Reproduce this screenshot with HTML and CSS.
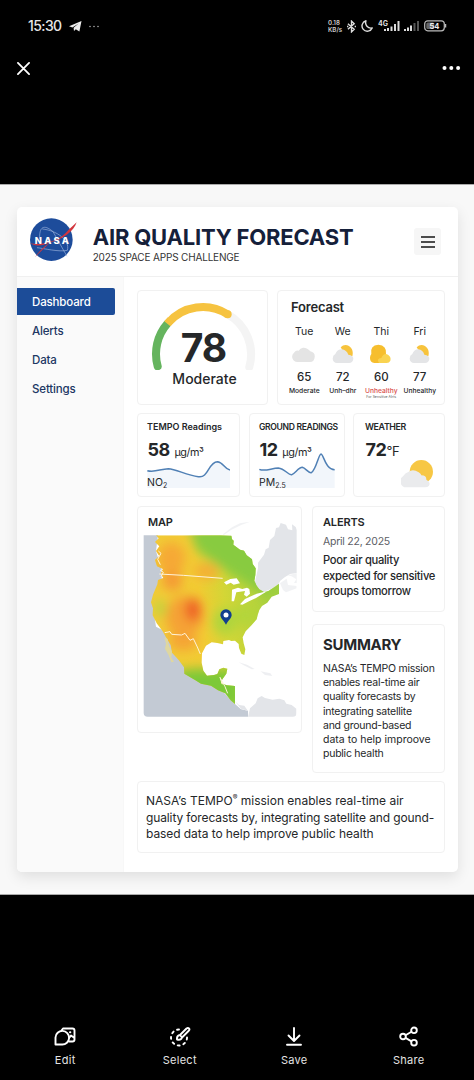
FILE: index.html
```html
<!DOCTYPE html>
<html lang="en">
<head>
<meta charset="utf-8">
<title>Air Quality Forecast</title>
<link rel="stylesheet" href="styles.css">
</head>
<body>
<div class="phone">
  <header class="status">
    <div class="status-left">
      <span class="clock">15:30</span>
      <svg class="plane" viewBox="0 0 13 11"><path d="M0 5.2 12.5 0 10.4 10.6 6.8 8.2 5 10 4.6 6.8 9.6 2.6 3.4 6.4Z" fill="#eee"/></svg>
      <svg class="more" viewBox="0 0 10 3"><g fill="#aaa"><circle cx="1" cy="1.5" r=".8"/><circle cx="5" cy="1.5" r=".8"/><circle cx="9" cy="1.5" r=".8"/></g></svg>
    </div>
    <div class="status-right">
      <span class="speed"><span>0.18</span><span>KB/s</span></span>
      <svg class="bt" viewBox="0 0 10 14"><path d="M1 4 8 10 5 13V1L8 4 1 10M0 7h1.5M8.5 7H10" fill="none" stroke="#ddd" stroke-width="1.5"/></svg>
      <svg class="moon" viewBox="0 0 12 12"><path d="M5 .8A5.3 5.3 0 1 0 11.2 8 5.4 5.4 0 0 1 5 .8Z" fill="none" stroke="#ddd" stroke-width="1.4" stroke-linejoin="round"/></svg>
      <svg class="signals" viewBox="0 0 42 12"><text x="0" y="5.6" class="fourg">4G</text><g fill="#ddd"><path d="M6 9h2v2H6zM9 8h2v3H9zM12.500 6.500h2V11h-2zM16 4h2v7h-2zM19.500 1h2v10h-2z"/><path d="M26 9h2v2h-2zM29 7.500h2V11h-2zM32 5.500h2V11h-2z"/></g><path d="M35.500 3h2v8h-2zM39 1h2v10h-2z" fill="#555"/></svg>
      <svg class="battery" viewBox="0 0 23 12"><rect x=".7" y=".8" width="19.600" height="10" rx="3" fill="none" stroke="#bbb" stroke-width="1.200"/><rect x="2.300" y="2.500" width="8" height="6.600" rx="1.500" fill="#666"/><path d="M21.600 4v3.500" stroke="#bbb" stroke-width="1.300"/><text x="10.500" y="8.900" text-anchor="middle" class="charge">54</text></svg>
    </div>
  </header>
  <div class="viewer-bar">
    <svg class="close" viewBox="0 0 14 14"><path d="M1 1 13 13M13 1 1 13" stroke="#fff" stroke-width="1.900" stroke-linecap="round"/></svg>
    <svg class="dots" viewBox="0 0 18 4"><g fill="#fff"><circle cx="2" cy="2" r="2"/><circle cx="8.800" cy="2" r="2"/><circle cx="15.600" cy="2" r="2"/></g></svg>
  </div>

  <main class="stage">
    <div class="dashboard">
      <div class="top">
        <svg class="logo" viewBox="88 110 146 136">
          <circle cx="155" cy="178" r="64" fill="#1d4c9b"/>
          <path d="M120 176C118 140 132 130 160 154L202 228M128 146C170 150 212 180 203 210C180 216 130 204 112 202" fill="none" stroke="#a9bee3" stroke-width="1.800"/>
          <path d="M91 188C120 197 180 184 207 148L231 126C223 153 189 178 152 186L106 230C126 202 142 193 154 184C124 200 103 197 91 188Z" fill="#d2363e"/>
          <text x="105" y="190" class="logo-text" textLength="103">NASA</text>
        </svg>
        <div class="titles">
          <h1>AIR QUALITY FORECAST</h1>
          <p>2025 SPACE APPS CHALLENGE</p>
        </div>
        <button class="burger" aria-label="Menu"><i></i><i></i><i></i></button>
      </div>
      <div class="body">
        <nav class="side">
          <a class="active">Dashboard</a><a>Alerts</a><a>Data</a><a>Settings</a>
        </nav>
        <div class="content">
          <div class="row row-a">
            <section class="card gauge">
              <svg class="arc" viewBox="60 65 320 205" fill="none" stroke-width="24">
                <path d="M293 102A138 138 0 0 1 358 260" stroke="#f4f4f4" stroke-linecap="round"/>
                <path d="M83 258A138 138 0 0 1 112 130" stroke="#65b45e" stroke-linecap="round"/>
                <path d="M112 130A138 138 0 0 1 122 119" stroke="#f6c340"/>
                <path d="M114 128A138 138 0 0 1 293 102" stroke="#f6c340" />
                <circle cx="293" cy="102" r="12" fill="#f6c340" stroke="none"/>
              </svg>
              <b class="aqi">78</b>
              <span class="level">Moderate</span>
            </section>
            <section class="card forecast">
              <h2>Forecast</h2>
              <div class="days">
                <div class="day"><span>Tue</span>
                  <svg viewBox="64 192 72 60"><path d="M80 246A16 16 0 0 1 70 218Q76 209 84 212A18 18 0 0 1 112 208Q118 212 119 214Q134 217 132 232Q131 246 118 246Z" fill="#e4e4e4"/></svg>
                  <b>65</b><small>Moderate</small></div>
                <div class="day"><span>We</span>
                  <svg viewBox="182 192 72 60"><path d="M211 202Q222 191 236 198Q251 208 246 229L230 232Z" fill="#f7c33c"/><path d="M200 249Q188 248 187 236Q187 226 195 222Q200 208 214 208Q229 210 234 224Q250 226 249 237Q247 249 236 249Z" fill="#e4e5e7"/></svg>
                  <b>72</b><small>Unh–dhr</small></div>
                <div class="day"><span>Thi</span>
                  <svg viewBox="297 192 72 60"><path d="M313 249Q300 247 300 234Q300 227 304 222Q299 196 325 194Q351 196 348 222Q355 248 330 249Z" fill="#f6be2e"/><path d="M327 249Q318 236 334 234Q342 216 355 225Q364 232 361 242Q358 249 350 249Z" fill="#f9d351"/></svg>
                  <b>60</b><small class="bad">Unhealthy<em>For Sensitive Alrts</em></small></div>
                <div class="day"><span>Fri</span>
                  <svg viewBox="409 192 72 60"><path d="M435 202Q446 191 460 198Q475 208 470 229L454 232Z" fill="#f7c33c"/><path d="M427 249Q415 248 414 236Q414 226 422 222Q427 208 440 208Q454 210 458 224Q474 226 473 237Q471 249 460 249Z" fill="#e4e5e7"/></svg>
                  <b>77</b><small>Unhealthy</small></div>
              </div>
            </section>
          </div>

          <div class="row row-b">
            <section class="card reading">
              <h3 class="t-tempo">TEMPO Readings</h3>
              <p class="value"><b>58</b> <span>µg/m³</span></p>
              <div class="chart">
                <svg class="spark" viewBox="51 140 250 108"><path d="M52 196C75 202 90 191 115 190C140 192 170 210 205 214C235 220 235 170 262 169C280 170 282 190 300 194V248H52Z" fill="#f2f6fb"/><path d="M52 196C75 202 90 191 115 190C140 192 170 210 205 214C235 220 235 170 262 169C280 170 282 190 300 194" fill="none" stroke="#5080b5" stroke-width="4.500"/></svg>
                <span class="gas">NO<sub>2</sub></span>
              </div>
            </section>
            <section class="card reading">
              <h3 class="t-ground">GROUND READINGS</h3>
              <p class="value"><b>12</b> <span>µg/m³</span></p>
              <div class="chart">
                <svg class="spark" viewBox="57 140 228 108"><path d="M58 192C75 200 95 188 115 188C135 190 145 210 155 208C165 206 175 186 187 186C197 188 205 204 214 202C228 195 236 146 243 146C252 148 255 192 284 193V248H58Z" fill="#f2f6fb"/><path d="M58 192C75 200 95 188 115 188C135 190 145 210 155 208C165 206 175 186 187 186C197 188 205 204 214 202C228 195 236 146 243 146C252 148 255 192 284 193" fill="none" stroke="#5080b5" stroke-width="4.500"/></svg>
                <span class="gas">PM<sub>2.5</sub></span>
              </div>
            </section>
            <section class="card reading weather">
              <h3 class="t-weather">WEATHER</h3>
              <p class="value"><b>72</b><span>°F</span></p>
              <svg class="sun" viewBox="484 162 98 88"><circle cx="545" cy="200" r="35" fill="#f7c744"/><path d="M502 247A18 18 0 0 1 490 214Q496 204 507 200Q520 190 537 202Q544 206 545 211Q561 212 560 224Q574 230 568 242Q564 247 556 247Z" fill="#eaebed"/></svg>
            </section>
          </div>

          <div class="row row-c">
            <section class="card map">
              <h2>MAP</h2>
              <svg class="atlas" viewBox="39 60 462 591">
                <defs>
                  <filter id="soft" x="-60%" y="-60%" width="220%" height="220%"><feGaussianBlur stdDeviation="16"/></filter>
                  <linearGradient id="heat" x1="0" x2="1" y1=".55" y2=".4"><stop offset="0" stop-color="#f0cb38"/><stop offset=".42" stop-color="#f2cb33"/><stop offset=".6" stop-color="#d3d636"/><stop offset="1" stop-color="#9ccf40"/></linearGradient>
                  <clipPath id="frame"><rect x="41" y="60" width="459" height="590" rx="12"/></clipPath>
                  <clipPath id="land"><path d="M78 106H270L304 107 306 118 311 122 310 134 330 149 342 152 350 166 366 178 368 192 377 205 376 225 373 242 380 257 388 268 402 276 415 273 432 262 447 251V282L425 290 412 308 396 318 388 330 383 345 380 358 365 375 347 394 338 412 341 430 346 448 343 465 334 461 327 444 326 432 315 422 304 423 297 420 280 423 279 433 262 429 245 427 228 437 216 460 215 488 220 512 231 527 252 525 262 522 268 508 280 503 292 506 289 521 277 538 273 550 290 556 315 558V612L302 601 286 580 264 571 243 557 213 551 195 540 163 521 162 502 146 480 126 458 122 435 107 410 98 394 80 370 68 346 69 325 63 307 69 284 82 253 84 240 100 234 92 220 99 207 81 199 75 180 88 168 78 153 88 139 75 126 86 115Z"/></clipPath>
                </defs>
                <g clip-path="url(#frame)">
                  <path d="M39 106H84L78 153 95 210 95 240 66 300 78 380 108 395 165 460 165 510 265 560 315 612 333 628 354 632V651H39Z" fill="#c3cad4"/>
                  <g fill="#e3e5e9">
                    <path d="M380 270 374 250 384 205 384 188 402 164 407 148 416 143 420 120 433 108 438 84 447 82 452 69 468 74 474 88 487 91 486 73 497 81 501 90V219L480 222 464 232 451 242 444 254 421 268 399 276Z"/>
                    <path d="M450 250 470 236 474 255 500 258V265L468 277 459 270ZM472 226 501 220V249H492L499 238 485 229ZM280 102 306 82 330 70 360 65 335 74 303 90 280 106Z" opacity=".5"/>
                    <path d="M354 651 360 625 377 610 383 595 395 588 405 594 428 599 448 596 463 601 469 611 485 615 499 626V651ZM315 604 327 615 343 617 354 633 333 626Z"/>
                    <path d="M326 487 351 494 374 507 365 508 344 497ZM392 514 421 520 427 528 405 525Z" opacity=".6"/>
                  </g>
                  <g clip-path="url(#land)">
                    <rect x="39" y="100" width="420" height="530" fill="url(#heat)"/>
                    <g filter="url(#soft)">
                      <path d="M175 80H420V290L340 245 275 205 200 150Z" fill="#88cb40"/>
                      <path d="M130 515 200 505 330 510 340 630 150 590Z" fill="#7dc938"/>
                      <ellipse cx="124" cy="175" rx="42" ry="48" fill="#f6a936"/>
                      <ellipse cx="127" cy="242" rx="30" ry="30" fill="#f59a35"/>
                      <ellipse cx="230" cy="214" rx="38" ry="25" fill="#f5ae35"/>
                      <ellipse cx="163" cy="350" rx="56" ry="62" fill="#f5a236"/>
                      <ellipse cx="160" cy="425" rx="44" ry="27" fill="#f5a436"/>
                      <ellipse cx="189" cy="329" rx="24" ry="35" fill="#ee5f28"/>
                      <ellipse cx="92" cy="325" rx="16" ry="25" fill="#b8d640"/>
                      <ellipse cx="285" cy="365" rx="35" ry="40" fill="#aed53c"/>
                      <ellipse cx="350" cy="345" rx="35" ry="30" fill="#b3d63a"/>
                    </g>
                  </g>
                  <path d="M103 412 113 417 117 438 126 455 124 473 132 485 124 487 116 466 105 446 108 431Z" fill="#dfd79f"/>
                  <g fill="#fff">
                    <path d="M282 247 301 237 320 235 330 250 311 254 302 248 289 254ZM306 269 324 263 337 267 351 263 358 267 360 281 350 290 342 284 345 273 330 275 319 277 312 304 305 304ZM330 313 345 297 363 289 380 281 411 274 378 294 357 304 337 314Z"/>
                  </g>
                  <path d="M88 222 160 226 278 235M104 398 120 395 125 403 155 405 165 400 180 421 190 416 202 441 211 462M277 553 270 532 285 560 293 580M85 153 93 160 83 178 91 194M90 210 100 217 93 230" fill="none" stroke="#fff3d8" stroke-width="3"/>
                </g>
                <path d="M288 374C280 360 271 354 271 345A17 17 0 0 1 305 345C305 354 296 360 288 374Z" fill="#123f8e"/><circle cx="288" cy="345" r="7.500" fill="#fff"/>
              </svg>
            </section>
            <div class="stack">
              <section class="card alerts">
                <h2>ALERTS</h2>
                <time>April 22, 2025</time>
                <p>Poor air quality<br>expected for sensitive<br>groups tomorrow</p>
              </section>
              <section class="card summary">
                <h2>SUMMARY</h2>
                <p>NASA’s TEMPO mission<br>enables real-time air<br>quality forecasts by<br>integrating satellite<br>and ground-based<br><span class="wide">data to help improove</span><br>public health</p>
              </section>
            </div>
          </div>

          <section class="card note">NASA’s TEMPO<sup>®</sup> mission enables real-time air<br><span class="tight">guality forecasts by, integrating satellite and gound-</span><br><span class="snug">based data to help improve public health</span></section>
        </div>
      </div>
    </div>
  </main>

  <footer class="tools">
    <div><svg viewBox="0 0 22 22" fill="none" stroke="#fff" stroke-width="1.900" stroke-linejoin="round" stroke-linecap="round"><path d="M1.500 18.500V11.500A6.800 6.800 0 1 1 8 18.500Z"/><path d="M7.500 4.500 9 2.500H18.500Q20.500 2.500 20.500 4.500V13.500Q20.500 15.500 18.500 15.500H15M15.500 11.500 17 9.500 20.500 12"/><path d="M16 6.200h.3" stroke-width="2"/></svg><span>Edit</span></div>
    <div><svg viewBox="0 0 22 22" fill="none" stroke="#fff" stroke-width="1.900" stroke-linejoin="round" stroke-linecap="round"><path d="M10 3.500A8 8 0 1 0 18 11" stroke-dasharray="2 3.900"/><path d="M8 13.500Q7.500 9.500 11 9L17.500 2.500Q19 1.500 20 2.500T19.500 5L13 11.500Q12 14.500 8 13.500ZM11 9 13 11.500"/></svg><span>Select</span></div>
    <div><svg viewBox="0 0 22 22" fill="none" stroke="#fff" stroke-width="1.900" stroke-linejoin="round" stroke-linecap="round"><path d="M11 2V14.500M5.500 9.500 11 15 16.500 9.500M4 18.700H18"/></svg><span>Save</span></div>
    <div><svg viewBox="0 0 22 22" fill="none" stroke="#fff" stroke-width="1.900"><circle cx="5" cy="10.500" r="2.800"/><circle cx="16" cy="4.300" r="2.800"/><circle cx="16" cy="16.700" r="2.800"/><path d="M7.500 9.200 13.500 5.700M7.500 11.900 13.500 15.300"/></svg><span>Share</span></div>
  </footer>
</div>
</body>
</html>
```
FILE: styles.css
```css
* { box-sizing: border-box; }
body, h1, h2, h3, p { margin: 0; }
body { background: #000; font-family: Inter, "Liberation Sans", sans-serif; color: #252729; }
svg { display: block; flex: none; }
.phone { width: 474px; height: 1080px; display: flex; flex-direction: column; overflow: hidden; background: #000; }

/* System bar and viewer controls */
.status { height: 52px; flex: none; display: flex; justify-content: space-between; padding: 0 27px 0 28px; }
.status-left, .status-right { display: flex; align-items: center; }
.clock { color: #e6e6e6; font: 500 14px/20px Inter, sans-serif; letter-spacing: -.6px; width: 41px; }
.plane { width: 13px; height: 11px; }
.more { width: 10px; height: 3px; margin-left: 7px; }
.speed { display: flex; flex-direction: column; gap: 1px; font: 600 6.200px/6px Inter, sans-serif; color: #ccc; width: 19px; }
.bt { width: 9px; height: 13px; }
.moon { width: 12px; height: 12px; margin-left: 5px; }
.signals { width: 42px; height: 12px; margin-left: 5px; overflow: visible; }
.fourg { font: 700 7px Inter, sans-serif; fill: #ddd; }
.battery { width: 23px; height: 12px; margin-left: 4px; }
.charge { font: 700 7.500px Inter, sans-serif; fill: #eee; }
.viewer-bar { height: 132px; flex: none; display: flex; justify-content: space-between; align-items: flex-start; padding: 9px 13px 0 17px; }
.close { width: 13px; height: 13px; margin-top: .5px; }
.dots { width: 19px; height: 4px; margin-top: 5px; }

/* Screenshot stage */
.stage { height: 711px; flex: none; background: #f8f8f8; padding: 22px 16px 0 17px; border-top: 1px solid #aaa; border-bottom: 1px solid #aaa; }
.dashboard { height: 665px; background: #fff; border-radius: 5px; box-shadow: 0 5px 14px rgba(0,0,0,.1); display: flex; flex-direction: column; }
.top { height: 70px; flex: none; display: flex; border-bottom: 1px solid #f0f0f0; padding-left: 12px; }
.logo { width: 48.700px; height: 45.300px; margin-top: 9.500px; }
.logo-text { font: 800 28px Inter, sans-serif; fill: #fff; }
.titles { margin-left: 15px; padding-top: 17px; white-space: nowrap; }
h1 { font-size: 22px; line-height: 27px; font-weight: 650; letter-spacing: -.2px; color: #15203a; }
.titles p { font-size: 10px; line-height: 13px; letter-spacing: -.17px; color: #333; }
.burger { margin: 21px 17px 0 auto; width: 27px; height: 27px; border: 0; padding: 0; border-radius: 3px; background: #f6f6f6; display: flex; flex-direction: column; gap: 3px; align-items: center; justify-content: center; }
.burger i { width: 14px; height: 2px; background: #4c4c4c; }
.body { flex: 1; display: flex; }
.side { width: 107px; flex: none; padding-top: 11px; background: #fafafa; border-right: 1px solid #f7f7f7; display: flex; flex-direction: column; gap: 2px; border-radius: 0 0 0 5px; }
.side a { height: 27px; line-height: 28px; padding-left: 15px; width: 98px; font-size: 11.500px; letter-spacing: -.15px; font-weight: 500; color: #203763; }
.side .active { background: #1c4c98; color: #fff; border-radius: 0 2px 2px 0; }
.content { padding: 13px 13px 0; width: 334px; white-space: nowrap; }
.card { border: 1px solid #f1f1f1; border-radius: 4px; background: #fff; }
.row { display: flex; }

.row-a { height: 115px; gap: 9px; }
.gauge { width: 131px; display: grid; justify-items: center; align-content: start; padding-left: 2px; }
.arc { width: 106.700px; height: 68.300px; margin-top: 11px; grid-area: 1 / 1; }
.aqi { grid-area: 1 / 1; align-self: end; font-size: 39px; line-height: 44px; font-weight: 650; letter-spacing: -1px; }
.level { font-size: 14px; line-height: 18px; font-weight: 500; padding-left: 2px; }
.forecast { width: 168px; padding: 8px 0 0 7px; }
.forecast h2 { font-size: 13px; line-height: 17px; font-weight: 600; letter-spacing: -.2px; padding-left: 6px; }
.days { display: grid; grid-template-columns: repeat(4, 38.500px); margin-top: 9px; }
.day { display: flex; flex-direction: column; align-items: center; }
.day span { font-size: 10.500px; line-height: 14px; }
.day svg { width: 24px; height: 20px; margin-top: 5px; }
.day b { font-size: 11.500px; line-height: 15px; font-weight: 500; margin-top: 6px; }
.day small { font-size: 6.700px; line-height: 9px; margin-top: 2px; font-weight: 500; text-align: center; }
.day .bad { color: #d9534f; height: 9px; }
.bad em { display: block; font: 400 3.500px/3px Inter, sans-serif; color: #555; }

.row-b { height: 84px; margin-top: 8px; gap: 9px; }
.reading { width: 103px; padding: 7px 0 0 9px; }
.reading:nth-child(2) { width: 96px; }
.weather { width: 92px; padding-left: 11px; margin-left: -1px; }
h3 { font-size: 9px; line-height: 12px; font-weight: 600; }
.t-ground { font-size: 8.600px; letter-spacing: -.35px; }
.t-weather { font-size: 8.800px; letter-spacing: -.35px; }
.value { line-height: 23px; margin-top: 5px; }
.value b { font-size: 18px; font-weight: 650; letter-spacing: -.4px; margin-left: .5px; }
.value span { font-size: 10.800px; letter-spacing: -.4px; }
.weather .value span { font-size: 13px; }
.chart { display: grid; margin-top: -12px; }
.chart > * { grid-area: 1 / 1; }
.spark { height: 36px; }
.gas { align-self: end; font-size: 10.500px; line-height: 11px; position: relative; }
.gas sub { font-size: 7px; line-height: 0; vertical-align: -1.500px; }
.sun { width: 32.700px; height: 29.300px; margin: -4px 0 0 36px; }

.row-c { height: 267px; margin-top: 9px; gap: 10px; align-items: flex-start; }
.map { width: 165px; height: 227px; padding: 8px 0 0 5px; }
.map h2, .alerts h2 { font-size: 11px; line-height: 14px; font-weight: 600; letter-spacing: -.15px; }
.map h2 { padding-left: 5px; }
.atlas { width: 154px; height: 197px; margin-top: -9px; }
.stack { display: flex; flex-direction: column; gap: 12px; width: 133px; }
.alerts { height: 106px; padding: 8px 0 0 10px; }
.alerts time { display: block; font-size: 10.500px; line-height: 14px; letter-spacing: -.25px; color: #5d6066; margin-top: 6px; }
.alerts p { font-size: 11.200px; line-height: 15.600px; letter-spacing: -.28px; font-weight: 500; margin-top: 4px; }
.summary { height: 149px; padding: 9px 0 0 10px; }
.summary h2 { font-size: 15px; line-height: 21px; font-weight: 650; letter-spacing: -.3px; }
.summary p { font-size: 10.500px; line-height: 14.200px; letter-spacing: -.25px; margin-top: 7px; }
.summary .wide { letter-spacing: 0; }
.note { height: 72px; margin-top: 8px; padding: 11px 0 0 8px; font-size: 12px; line-height: 16.600px; }
.note sup { font-size: 7px; line-height: 0; }
.tight { letter-spacing: -.12px; }
.snug { letter-spacing: -.07px; }

.tools { flex: 1; padding: 131px 8px 0; display: grid; grid-template-columns: repeat(4, 1fr); }
.tools div { display: flex; flex-direction: column; align-items: center; }
.tools svg { width: 22px; height: 22px; }
.tools span { color: #e4e4e4; font-size: 11px; line-height: 14px; margin-top: 5px; letter-spacing: .3px; }
```
